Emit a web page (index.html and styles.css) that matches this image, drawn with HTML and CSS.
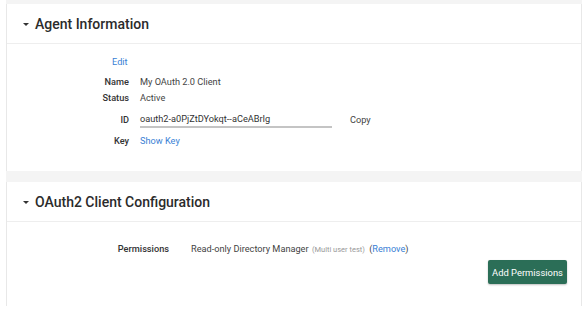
FILE: index.html
```html
<!DOCTYPE html>
<html>
<head>
<meta charset="utf-8">
<link rel="stylesheet" href="styles.css">
</head>
<body>
<div class="page">
  <section class="card card-agent">
    <header class="card-head">
      <span class="caret"></span>
      <h2 class="card-title">Agent Information</h2>
    </header>
    <div class="card-body agent-body">
      <div class="row row-edit"><span class="label"></span><a class="link edit">Edit</a></div>
      <div class="row row-name"><span class="label">Name</span><span class="value">My OAuth 2.0 Client</span></div>
      <div class="row row-status"><span class="label">Status</span><span class="value">Active</span></div>
      <div class="row row-id"><span class="label">ID</span><span class="id-field">oauth2-a0PjZtDYokqt--aCeABrIg</span><span class="copy">Copy</span></div>
      <div class="row row-key"><span class="label">Key</span><a class="link">Show Key</a></div>
    </div>
  </section>
  <section class="card card-oauth">
    <header class="card-head">
      <span class="caret"></span>
      <h2 class="card-title">OAuth2 Client Configuration</h2>
    </header>
    <div class="card-body oauth-body">
      <div class="perm-row">
        <span class="perm-label">Permissions</span>
        <span class="perm-value">Read-only Directory Manager <span class="muted">(Multi user test)</span> <span class="paren">(<a class="link">Remove</a>)</span></span>
      </div>
      <div class="actions"><button class="btn">Add Permissions</button></div>
    </div>
  </section>
</div>
</body>
</html>
```
FILE: styles.css
```css
html, body { margin: 0; padding: 0; background: #fff; }
body { font-family: Roboto, "Noto Sans", sans-serif; color: #333; }
.page {
  margin-left: 6px;
  width: 576px;
  background: #f4f4f4;
  padding-top: 4px;
  display: flex;
  flex-direction: column;
  gap: 11px;
}
.card {
  background: #fff;
  border-left: 1px solid #e8e8e8;
  border-right: 1px solid #e8e8e8;
}
.card-head {
  height: 40px;
  border-bottom: 1px solid #eeeeee;
  display: flex;
  align-items: center;
  padding-left: 16px;
  box-sizing: border-box;
}
.caret {
  width: 0; height: 0;
  border-left: 3px solid transparent;
  border-right: 3px solid transparent;
  border-top: 3px solid #333;
  margin-right: 6px;
  margin-top: 2px;
}
.card-title {
  margin: 0;
  font-size: 14px;
  font-weight: 500;
  color: #2b2b2b;
}
.agent-body {
  height: 127px;
  padding-top: 9px;
  box-sizing: border-box;
  font-size: 9.2px;
}
.row { display: flex; align-items: center; height: 16px; }
.label {
  width: 122px;
  text-align: right;
  font-weight: 500;
  color: #333;
  margin-right: 11px;
}
.value { color: #444; }
.link { color: #3a7fd5; cursor: pointer; }
.row-edit { margin-bottom: 4px; }
.row-edit .edit { margin-left: -28px; }
.row-id { margin-top: 6px; margin-bottom: 5px; }
.id-field {
  align-self: flex-start;
  width: 192px;
  line-height: 14px;
  margin-top: 1px;
  border-bottom: 2px solid #c4c4c4;
  color: #333;
}
.copy { margin-left: 18px; color: #444; }
.oauth-body {
  height: 84px;
  box-sizing: border-box;
  padding-top: 20px;
  font-size: 9.2px;
}
.perm-row { display: flex; align-items: center; height: 12px; }
.perm-label {
  width: 162px;
  text-align: right;
  font-weight: 500;
  margin-right: 22px;
  color: #333;
}
.perm-value { color: #444; }
.muted { font-size: 7.5px; color: #999; margin-left: 1px; margin-right: 2px; }
.paren { color: #444; }
.actions { display: flex; justify-content: flex-end; padding-right: 14px; margin-top: 6px; }
.btn {
  background: #2b6e57;
  color: #fff;
  border: none;
  border-radius: 2px;
  font-family: Roboto, sans-serif;
  font-size: 9.4px;
  height: 24px;
  width: 79px;
  padding: 0;
  box-shadow: 0 1px 2px rgba(0,0,0,0.25);
}
```
